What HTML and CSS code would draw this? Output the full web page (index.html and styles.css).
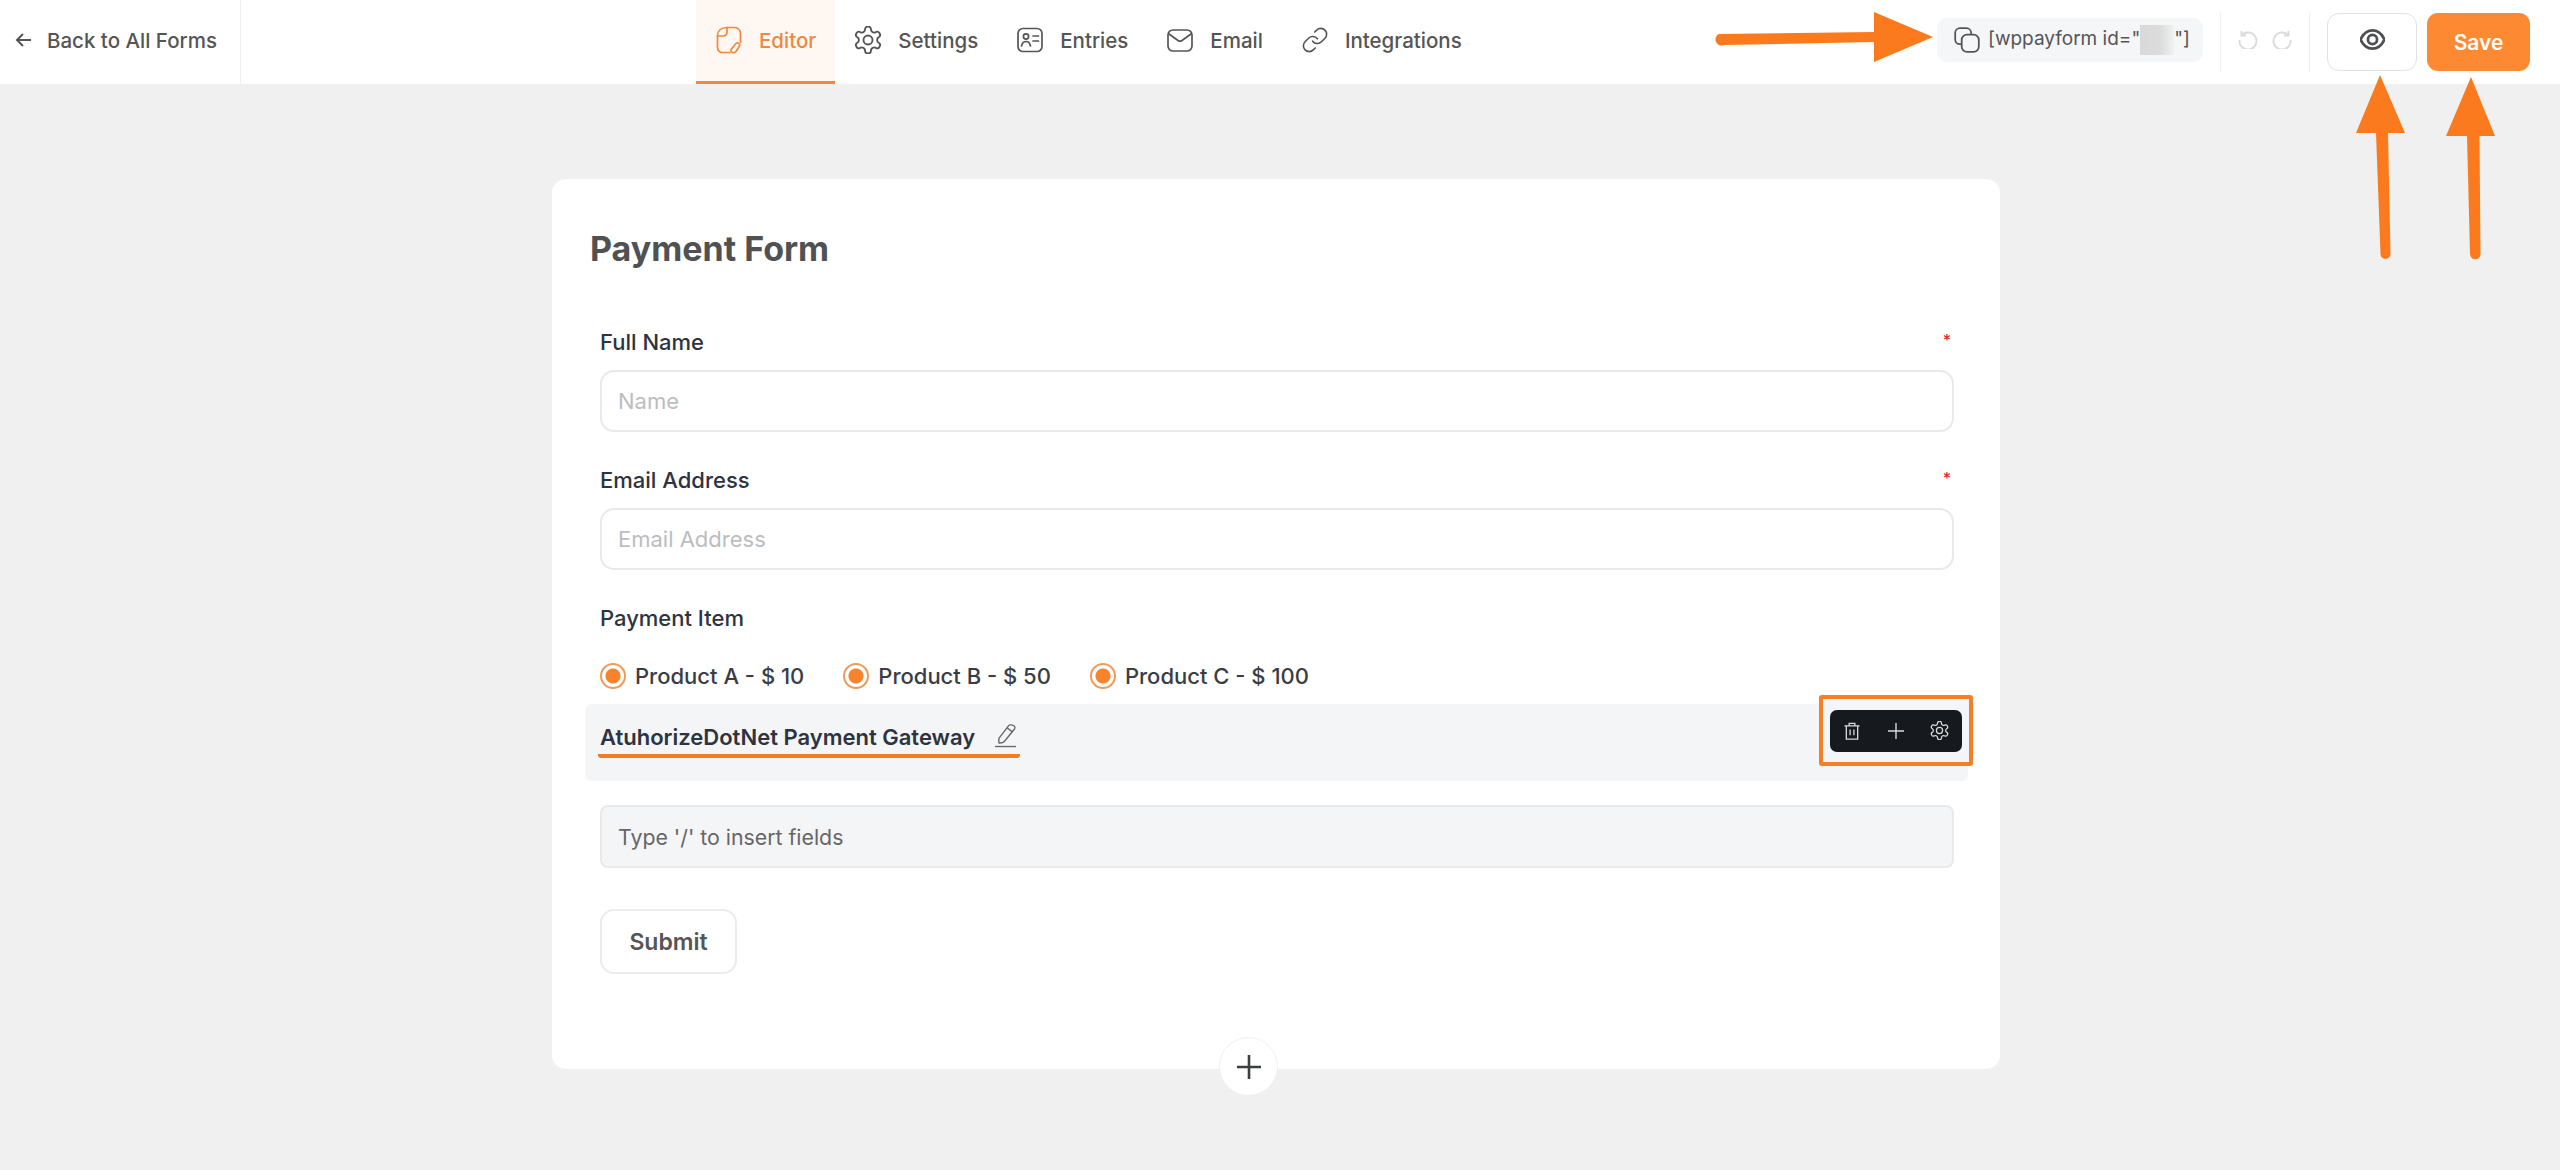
FILE: index.html
```html
<!DOCTYPE html>
<html lang="en">

<head>
    <meta charset="UTF-8">
    <meta name="viewport" content="width=device-width, initial-scale=1.0">
    <title>Payment Form</title>
    <link rel="stylesheet" href="styles.css">
</head>

<body>
    <svg class="icon-sprite" width="0" height="0">
        <symbol id="gear" viewBox="1.5 1.5 21 21">
            <path d="M12.22 2h-.44a2 2 0 0 0-2 2v.18a2 2 0 0 1-1 1.73l-.43.25a2 2 0 0 1-2 0l-.15-.08a2 2 0 0 0-2.73.73l-.22.38a2 2 0 0 0 .73 2.73l.15.1a2 2 0 0 1 1 1.72v.51a2 2 0 0 1-1 1.74l-.15.09a2 2 0 0 0-.73 2.73l.22.38a2 2 0 0 0 2.73.73l.15-.08a2 2 0 0 1 2 0l.43.25a2 2 0 0 1 1 1.73V20a2 2 0 0 0 2 2h.44a2 2 0 0 0 2-2v-.18a2 2 0 0 1 1-1.73l.43-.25a2 2 0 0 1 2 0l.15.08a2 2 0 0 0 2.73-.73l.22-.39a2 2 0 0 0-.73-2.73l-.15-.08a2 2 0 0 1-1-1.74v-.5a2 2 0 0 1 1-1.74l.15-.09a2 2 0 0 0 .73-2.73l-.22-.38a2 2 0 0 0-2.73-.73l-.15.08a2 2 0 0 1-2 0l-.43-.25a2 2 0 0 1-1-1.73V4a2 2 0 0 0-2-2z" />
            <circle cx="12" cy="12" r="3.4" />
        </symbol>
    </svg>

    <header class="topbar">
        <a class="back-link" href="#">
            <svg class="icon-back" viewBox="0 0 20 20"><path d="M17 10H3.5M9 4l-6 6 6 6" /></svg>
            Back to All Forms
        </a>

        <nav class="tabs">
            <a class="tab tab-active" href="#">
                <svg class="icon" viewBox="0 0 28 28"><path d="M12 1.500h7.500a6 6 0 0 1 6 6v9" /><path d="M12 1.500C6 1.500 2.500 5 2.500 10v11.500a5 5 0 0 0 5 5H15" /><path d="M12 1.500v5a3.500 3.500 0 0 1-3.500 3.500H2.500" /><path d="M17.500 26.500c-1.500-.5-2-2-1-3.500l4.500-5.500c1.500-1.500 4.500.3 3.500 2.500l-3.500 5.500c-.8 1-2 1.500-3.500 1z" /></svg>
                Editor
            </a>
            <a class="tab" href="#">
                <svg class="icon icon-thin"><use href="#gear" /></svg>
                Settings
            </a>
            <a class="tab" href="#">
                <svg class="icon" viewBox="0 0 28 28"><rect x="2" y="2.500" width="24" height="23" rx="5" /><circle cx="10" cy="10.500" r="2.600" /><path d="M5.500 20c.6-3 2.300-4.500 4.500-4.500s3.900 1.500 4.500 4.500M17 10h5.500M17 15h5.500" /></svg>
                Entries
            </a>
            <a class="tab" href="#">
                <svg class="icon" viewBox="0 0 28 28"><rect x="2" y="4" width="24" height="21" rx="5" /><path d="M3 8l9 6.500a3.500 3.500 0 0 0 4 0L25 8" /></svg>
                Email
            </a>
            <a class="tab" href="#">
                <svg class="icon icon-thin" viewBox="0 0 24 24"><path d="M10 13a5 5 0 0 0 7.54.54l3-3a5 5 0 0 0-7.07-7.07l-1.72 1.71" /><path d="M14 11a5 5 0 0 0-7.54-.54l-3 3a5 5 0 0 0 7.07 7.07l1.71-1.71" /></svg>
                Integrations
            </a>
        </nav>

        <div class="topbar-actions">
            <div class="shortcode">
                <svg class="icon" viewBox="1 1 22 22"><path d="M15.500 6.500V6a4 4 0 0 0-4-4H6a4 4 0 0 0-4 4v5.500a4 4 0 0 0 4 4h.5" /><rect x="7.500" y="7.500" width="14.500" height="14.500" rx="4.500" /></svg>
                <span class="shortcode-text">[wppayform id="<span class="blurred"></span>"]</span>
            </div>
            <span class="divider"></span>
            <div class="history">
                <svg class="icon-history" viewBox="0 0 20 20"><path d="M3.500 2v4.500H8M3.500 6.500A8.500 8.500 0 1 1 1.500 11" /></svg>
                <svg class="icon-history" viewBox="0 0 20 20"><path d="M16.500 2v4.500H12M16.500 6.500A8.500 8.500 0 1 0 18.500 11" /></svg>
            </div>
            <span class="divider"></span>
            <button class="btn-preview" type="button">
                <svg class="icon-eye" viewBox="1 1 22 22"><path d="M1.500 12C4 6.500 7.500 4 12 4s8 2.500 10.500 8c-2.500 5.500-6 8-10.500 8s-8-2.500-10.500-8z" /><circle cx="12" cy="12" r="4" /></svg>
            </button>
            <button class="btn-save" type="button">Save</button>
        </div>
    </header>

    <main class="workspace">
        <section class="form-card">
            <h1 class="form-title">Payment Form</h1>

            <div class="field">
                <div class="field-label"><span>Full Name</span><span class="required">*</span></div>
                <div class="input">Name</div>
            </div>

            <div class="field">
                <div class="field-label"><span>Email Address</span><span class="required">*</span></div>
                <div class="input">Email Address</div>
            </div>

            <div class="field-label">Payment Item</div>
            <div class="radio-group">
                <label class="radio"><span class="radio-mark"></span>Product A - $ 10</label>
                <label class="radio"><span class="radio-mark"></span>Product B - $ 50</label>
                <label class="radio"><span class="radio-mark"></span>Product C - $ 100</label>
            </div>

            <div class="gateway-row">
                <div class="gateway-label">
                    AtuhorizeDotNet Payment Gateway
                    <svg class="icon-pencil" viewBox="0 0 24 26"><path d="M5.500 15.500L15.500 2.500c1-1.200 5-.5 6 1 .8 1.100.3 2.200-.3 3L11 19c-1 1.200-3.500 2-5.800 1.800-.5-2 -.5-3.800.3-5.300zM13.500 5l6 4.500" /><path d="M1 24.500h22" /></svg>
                </div>
                <div class="toolbar-frame">
                    <div class="toolbar">
                        <svg viewBox="0 0 18 19"><path d="M1 4h16M6 4V1.500h6V4M3 4v14h12V4M7 8v6M11 8v6" /></svg>
                        <svg viewBox="0 0 18 18"><path d="M9 1v16M1 9h16" /></svg>
                        <svg class="toolbar-gear"><use href="#gear" /></svg>
                    </div>
                </div>
            </div>

            <div class="insert-field">Type '/' to insert fields</div>

            <button class="btn-submit" type="button">Submit</button>

            <button class="btn-add" type="button">
                <svg viewBox="0 0 26 26"><path d="M13 1v24M1 13h24" /></svg>
            </button>
        </section>
    </main>

    <!-- annotation arrows drawn on top of the screenshot -->
    <svg class="arrows" viewBox="0 0 2560 1170">
        <path d="M1719 34L1874 32V12L1933 37 1874 62V42L1724 45a5.500 5.500 0 0 1-5-11z" />
        <path d="M2376 133H2356L2380 75 2405 133H2388L2390.500 254a5 5 0 0 1-10 0z" />
        <path d="M2467 136H2446L2471 77 2495 136H2479.500L2480.500 254a5 5 0 0 1-10.500 0z" />
    </svg>
</body>

</html>
```

FILE: styles.css
```css
* {
    box-sizing: border-box;
}

body {
    font-family: Inter, "Liberation Sans", sans-serif;
    background-color: #f0f0f0;
    margin: 0;
    padding: 0;
    min-height: 1170px;
    position: relative;
    color: #555;
}

a {
    color: inherit;
    text-decoration: none;
}

button {
    font-family: inherit;
    cursor: pointer;
}

svg {
    display: block;
    fill: none;
    stroke: currentColor;
}

.icon-sprite {
    position: absolute;
}

/* Top bar */
.topbar {
    display: flex;
    height: 84px;
    background-color: #fff;
    padding-right: 30px;
    font-size: 20.5px;
    font-weight: 500;
}

.back-link {
    display: flex;
    align-items: center;
    gap: 13px;
    width: 241px;
    padding: 0 0 4px 14px;
    border-right: 1px solid #f0f0f0;
}

.icon-back {
    width: 20px;
    height: 20px;
    stroke-width: 2;
}

.tabs {
    display: flex;
    margin-left: 455px;
}

.tab {
    display: flex;
    align-items: center;
    gap: 16px;
    padding: 0 19px 4px;
}

.tab-active {
    color: #f0883f;
    background-color: #fef7f2;
    border-bottom: 3px solid #f0883f;
    padding-bottom: 1px;
}

.icon {
    flex: none;
    width: 28px;
    height: 28px;
    stroke-width: 1.7;
    stroke-linecap: round;
    stroke-linejoin: round;
}

.icon-thin {
    stroke-width: 1.4;
}

.topbar-actions {
    display: flex;
    align-items: center;
    margin-left: auto;
}

.shortcode {
    display: flex;
    align-items: center;
    gap: 8px;
    width: 266px;
    height: 44px;
    margin-top: -4px;
    padding-left: 17px;
    background-color: #f4f6f8;
    border-radius: 10px;
    font-size: 19px;
    font-weight: 400;
}

.shortcode .icon {
    width: 26px;
    height: 26px;
    stroke-width: 1.5;
}

.shortcode-text {
    white-space: nowrap;
}

.blurred {
    display: inline-block;
    width: 34px;
    height: 30px;
    vertical-align: middle;
    background: linear-gradient(90deg, #d9d9d9, #dcdcdc 60%, #f0f1f2);
}

.divider {
    width: 1px;
    height: 60px;
    margin: 0 17px;
    background-color: #f0f0f0;
}

.history {
    display: flex;
    gap: 14px;
    width: 54px;
    padding-bottom: 7px;
    color: #dcdcdc;
}

.icon-history {
    width: 20px;
    height: 20px;
    stroke-width: 2;
}

.btn-preview {
    display: flex;
    align-items: center;
    justify-content: center;
    width: 90px;
    height: 58px;
    margin-right: 10px;
    padding: 0 0 5px;
    background-color: #fff;
    border: 1px solid #e3e3e3;
    border-radius: 12px;
    color: #4d4f52;
}

.icon-eye {
    width: 25px;
    height: 25px;
    stroke-width: 2.4;
}

.btn-save {
    width: 103px;
    height: 58px;
    background-color: #fd8a33;
    border: 0;
    border-radius: 11px;
    color: #fff;
    font-size: 21px;
    font-weight: 600;
}

/* Form card */
.workspace {
    padding: 95px 0 0 552px;
}

.form-card {
    position: relative;
    width: 1448px;
    height: 890px;
    padding: 48px 46px 0 48px;
    background-color: #fff;
    border-radius: 14px;
}

.form-title {
    margin: 0 0 58px -10px;
    font-size: 34px;
    line-height: 44px;
    font-weight: 700;
    color: #4f5153;
}

.field {
    margin-bottom: 35px;
}

.field-label {
    display: flex;
    justify-content: space-between;
    font-size: 22px;
    line-height: 26px;
    font-weight: 500;
    color: #2d3340;
}

.required {
    margin-right: 3px;
    font-size: 16px;
    line-height: 22px;
    color: #e5262b;
}

.input {
    display: flex;
    align-items: center;
    height: 62px;
    margin-top: 15px;
    padding-left: 16px;
    border: 2px solid #e9e9e9;
    border-radius: 14px;
    font-size: 22px;
    color: #bbbdbf;
}

.radio-group {
    display: flex;
    gap: 39px;
    margin-top: 32px;
}

.radio {
    display: flex;
    align-items: center;
    gap: 9px;
    font-size: 22px;
    line-height: 26px;
    font-weight: 500;
    color: #3a3d44;
}

.radio-mark {
    width: 26px;
    height: 26px;
    border: 2px solid #f19a58;
    border-radius: 50%;
    background: radial-gradient(circle, #f5842c 0 7px, transparent 8px);
}

.gateway-row {
    position: relative;
    margin: 15px -14px 0 -15px;
    height: 77px;
    padding: 20px 0 0 13px;
    background-color: #f4f5f7;
    border-radius: 6px;
}

.gateway-label {
    display: inline-flex;
    align-items: center;
    gap: 19px;
    width: 422px;
    height: 34px;
    padding: 0 0 4px 2px;
    border-bottom: 4px solid #f47b20;
    border-radius: 0 0 3px 3px;
    font-size: 22px;
    line-height: 26px;
    font-weight: 600;
    color: #2d3340;
    white-space: nowrap;
}

.icon-pencil {
    flex: none;
    width: 23px;
    height: 25px;
    margin-top: -3px;
    stroke-width: 1.4;
    color: #666;
}

/* the orange frame is an annotation around the field toolbar */
.toolbar-frame {
    position: absolute;
    top: -9px;
    right: -5px;
    display: flex;
    align-items: center;
    justify-content: center;
    width: 154px;
    height: 71px;
    border: 4px solid #f47f27;
    border-radius: 3px;
    background-color: #f3f5f8;
}

.toolbar {
    display: flex;
    align-items: center;
    justify-content: space-between;
    width: 132px;
    height: 42px;
    padding: 0 13px;
    background-color: #16191d;
    border-radius: 7px;
    color: #d8dadc;
}

.toolbar svg {
    width: 18px;
    height: 18px;
    stroke-width: 1.4;
}

.toolbar .toolbar-gear {
    width: 19px;
    height: 19px;
}

.insert-field {
    display: flex;
    align-items: center;
    height: 63px;
    margin-top: 24px;
    padding-left: 16px;
    background-color: #f4f5f7;
    border: 2px solid #e9e9e9;
    border-radius: 8px;
    font-size: 21.3px;
    color: #666;
}

.btn-submit {
    display: block;
    width: 137px;
    height: 65px;
    margin-top: 41px;
    background-color: #fff;
    border: 2px solid #ececec;
    border-radius: 14px;
    font-size: 23px;
    font-weight: 600;
    color: #555;
}

.btn-add {
    position: absolute;
    bottom: -27px;
    left: 667px;
    display: flex;
    align-items: center;
    justify-content: center;
    width: 59px;
    height: 59px;
    padding: 0;
    background-color: #fff;
    border: 1px solid #f0f0f0;
    border-radius: 50%;
    color: #3c3f42;
}

.btn-add svg {
    width: 26px;
    height: 26px;
    stroke-width: 2.6;
}

.arrows {
    position: absolute;
    top: 0;
    left: 0;
    width: 2560px;
    height: 1170px;
    fill: #fb7a1e;
    stroke: none;
    pointer-events: none;
}
```
